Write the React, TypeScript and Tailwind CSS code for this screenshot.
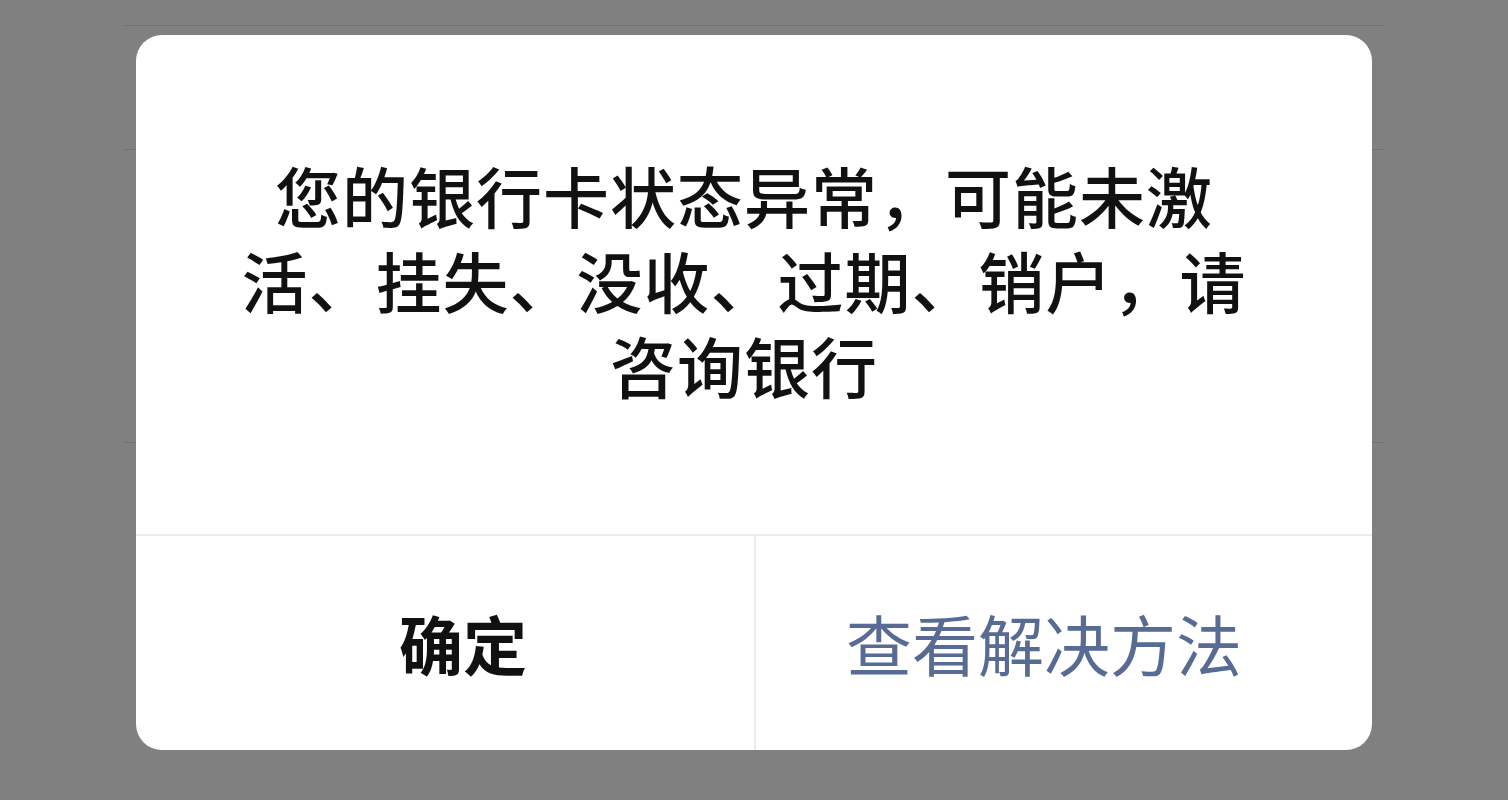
import React from "react";

// Dimmed page behind the alert: only a few list dividers peek out at the edges.
function BackdropList() {
  const rows = [26, 124, 293];
  return (
    <div className="px-[124px]">
      {rows.map((h, i) => (
        <div key={i} className="border-b border-[#727272]" style={{ height: h }} />
      ))}
    </div>
  );
}

export default function App() {
  return (
    <div
      className="relative h-[800px] w-full overflow-hidden bg-[#808080]"
      style={{ fontFamily: '"Noto Sans CJK SC", "Noto Sans", sans-serif' }}
    >
      <BackdropList />

      <div className="absolute inset-0 flex justify-center pt-[35px]">
        <div className="flex h-[715px] w-[1236px] flex-col overflow-hidden rounded-[26px] bg-white">
          <div className="flex flex-1 items-center justify-center pb-[10px] pl-[50px] pr-[70px]">
            <p className="text-center text-[66px] font-medium leading-[85px] tracking-[1px] text-[#111111]">
              您的银行卡状态异常，可能未激
              <br />
              活、挂失、没收、过期、销户，请
              <br />
              咨询银行
            </p>
          </div>

          <div className="grid h-[216px] grid-cols-2 border-t-2 border-[#ececec]">
            <button className="flex items-center justify-center pb-[2px] pl-[36px] text-[64px] font-bold text-[#111111]">
              确定
            </button>
            <button className="flex items-center justify-center border-l-2 border-[#ececec] pb-[2px] pr-[40px] text-[66px] text-[#576b95]">
              查看解决方法
            </button>
          </div>
        </div>
      </div>
    </div>
  );
}
